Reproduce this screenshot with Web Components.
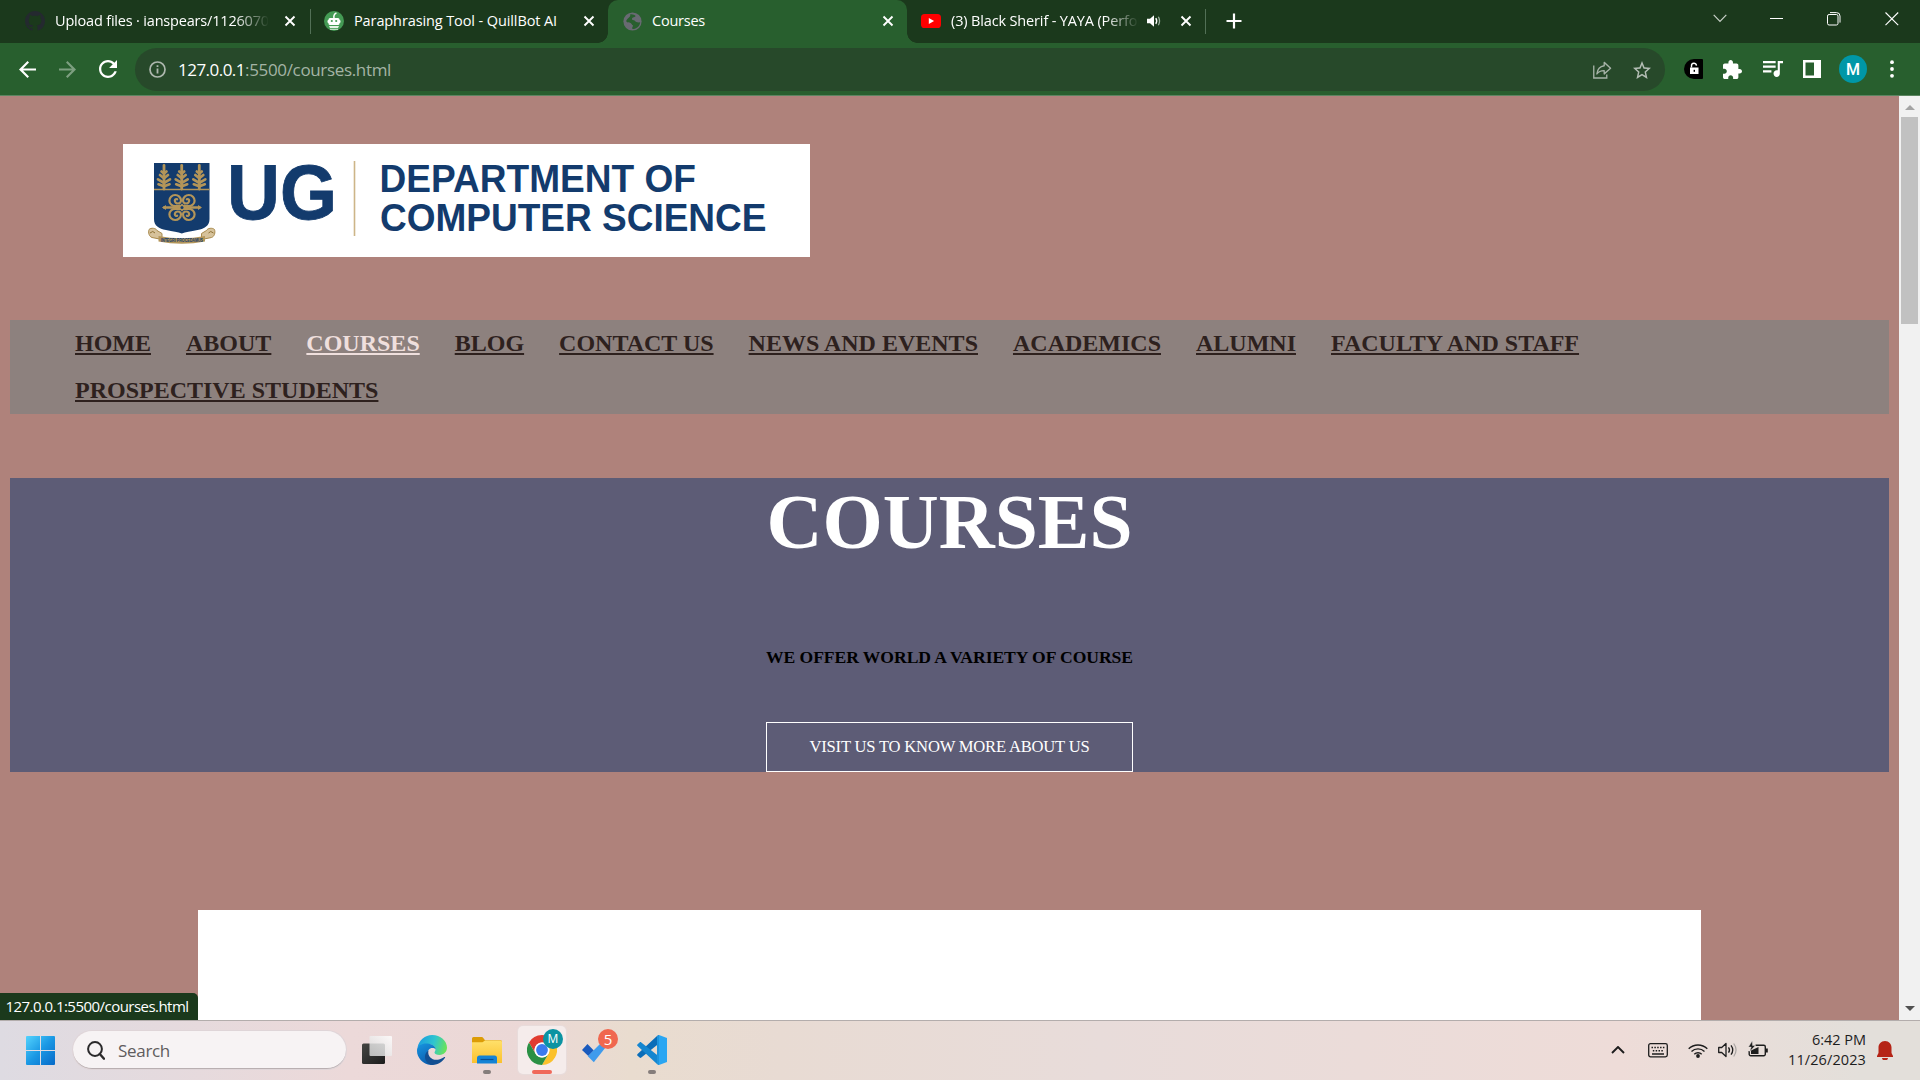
<!DOCTYPE html>
<html lang="en">
<head>
<meta charset="utf-8">
<title>Courses</title>
<style>
html,body{margin:0;height:1080px;overflow:hidden}
body{width:1920px;display:flex;flex-direction:column;font-family:"Open Sans","Noto Sans",sans-serif;background:#af827b}
</style>
</head>
<body>
<tab-strip></tab-strip>
<tool-bar></tool-bar>
<page-view></page-view>
<task-bar></task-bar>
<script>
const ICONS = {
github:['0 0 16 16','<path fill="#24292f" d="M8 0C3.58 0 0 3.58 0 8c0 3.54 2.29 6.53 5.47 7.59.4.07.55-.17.55-.38 0-.19-.01-.82-.01-1.49-2.01.37-2.53-.49-2.69-.94-.09-.23-.48-.94-.82-1.13-.28-.15-.68-.52-.01-.53.63-.01 1.08.58 1.23.82.72 1.21 1.87.87 2.33.66.07-.52.28-.87.51-1.07-1.78-.2-3.64-.89-3.64-3.95 0-.87.31-1.59.82-2.15-.08-.2-.36-1.02.08-2.12 0 0 .67-.21 2.2.82.64-.18 1.32-.27 2-.27s1.36.09 2 .27c1.53-1.04 2.2-.82 2.2-.82.44 1.1.16 1.92.08 2.12.51.56.82 1.27.82 2.15 0 3.07-1.87 3.75-3.65 3.95.29.25.54.73.54 1.48 0 1.07-.01 1.93-.01 2.2 0 .21.15.46.55.38A8.01 8.01 0 0016 8c0-4.42-3.58-8-8-8z"/>'],
quill:['0 0 20 20','<circle cx="10" cy="10" r="10" fill="#449a54"/><path d="M10 7.500C9.500 5 10.500 3 12 2.200" stroke="#fff" stroke-width="1.500" fill="none" stroke-linecap="round"/><rect x="4.500" y="7" width="11" height="7" rx="1.500" fill="#fff"/><rect x="3.500" y="9" width="13" height="3" rx="1" fill="#fff"/><circle cx="7.800" cy="10" r="1.100" fill="#449a54"/><circle cx="12.200" cy="10" r="1.100" fill="#449a54"/><path d="M5 15h10l-1 2H6z" fill="#e5f3e6"/><path d="M6 18.300h8" stroke="#d5ebd7" stroke-width="1"/>'],
globe:['0 0 20 20','<circle cx="10" cy="10" r="9.600" fill="#686a72"/><path d="M7.500 2.500c.5 2-.5 2.300-1.500 3.500S3 8.500 3.500 10c1 1.500 3 .5 4.500 1.500s1 2 2.500 2.500c0 2-1.500 2.500-.5 4 4.500 0 8-3.500 8-7.500-1.200 1-2.600.6-4 .1-1.600-.6-1.100-1.700-2.600-1.900S9 8 9.600 6.600s3.300-.6 3.700-2.300c-1.200-1.500-3.600-2.300-5.800-1.800z" fill="#285f2e"/>'],
youtube:['0 0 20 14','<rect width="20" height="14" rx="3.600" fill="#f00"/><path d="M7.800 4l5.300 3-5.300 3z" fill="#fff"/>'],
x:['0 0 12 12','<path d="M1.500 1.500l9 9M10.500 1.500l-9 9" stroke="#fff" stroke-width="1.900"/>'],
sound:['0 0 14 14','<path d="M0 4.800h3L7 1.200v11.600L3 9.200H0z" fill="#fff"/><path d="M8.800 4.200q1.800 2.800 0 5.600" stroke="#fff" stroke-width="1.400" fill="none"/><path d="M11.400 2.700q2.300 4.300 0 8.600" stroke="#9bb09d" stroke-width="1.300" fill="none"/>'],
plus:['0 0 16 16','<path d="M8 .5v15M.5 8h15" stroke="#fff" stroke-width="2.200"/>'],
chev:['0 0 14 9','<path d="M.7.900L7 7.400 13.300.900" stroke="#c9d1c9" stroke-width="1.200" fill="none"/>'],
min:['0 0 14 14','<path d="M0 6.500h13" stroke="#fff"/>'],
restore:['0 0 14 14','<rect x=".5" y="2.500" width="10.500" height="10.500" rx="1.600" fill="none" stroke="#fff"/><path d="M3 .6h6.500a3.500 3.500 0 013.500 3.500v6.500" fill="none" stroke="#fff"/>'],
close:['0 0 14 14','<path d="M.5.500l12.700 12.700M13.200.500L.5 13.200" stroke="#fff" stroke-width="1.100"/>'],
back:['4 4 16 16','<path fill="#fff" d="M20 11H7.830l5.590-5.590L12 4l-8 8 8 8 1.410-1.410L7.830 13H20v-2z"/>'],
fwd:['4 4 16 16','<path fill="#7d9f80" d="M12 4l-1.410 1.410L16.170 11H4v2h12.170l-5.580 5.590L12 20l8-8z"/>'],
reload:['4 4 16 16','<path fill="#fff" d="M17.65 6.350C16.200 4.900 14.210 4 12 4c-4.420 0-7.990 3.580-7.990 8s3.570 8 7.990 8c3.730 0 6.840-2.550 7.730-6h-2.080c-.82 2.330-3.040 4-5.650 4-3.310 0-6-2.690-6-6s2.690-6 6-6c1.660 0 3.140.69 4.220 1.780L13 11h7V4l-2.350 2.350z"/>'],
info:['0 0 17 17','<circle cx="8.500" cy="8.500" r="7.500" fill="none" stroke="#aeb8af" stroke-width="1.700"/><path d="M8.500 7.500v5M8.500 4.200v1.900" stroke="#aeb8af" stroke-width="1.800"/>'],
share:['0 0 20 18','<path d="M.8 4.500V17h13.700v-3.500" fill="none" stroke="#a7b3a8" stroke-width="1.400"/><path d="M11.800 1.400l6.700 5.800-6.700 5.700V9.600c-3.600-.1-5.900.9-7.700 3.300.5-4.400 3-7.600 7.700-8.200z" fill="none" stroke="#a7b3a8" stroke-width="1.400" stroke-linejoin="round"/>'],
star:['2 2 20 19','<path fill="#b4beb5" d="M22 9.240l-7.190-.62L12 2 9.190 8.630 2 9.240l5.460 4.730L5.820 21 12 17.270 18.180 21l-1.630-7.030L22 9.240zM12 15.400l-3.760 2.270 1-4.280-3.320-2.880 4.380-.38L12 6.100l1.710 4.040 4.380.38-3.320 2.880 1 4.280L12 15.400z"/>'],
lock:['0 0 19 20','<path d="M10 0h8a1 1 0 011 1v18a1 1 0 01-1 1h-8A10 10 0 0110 0z" fill="#000"/><rect x="6" y="8.500" width="8.500" height="6.500" fill="#fff"/><path d="M7.500 8.500V7a2.500 2.500 0 015-.4" fill="none" stroke="#fff" stroke-width="1.400"/><rect x="9.600" y="10.800" width="1.400" height="2" fill="#000"/>'],
puzzle:['2 1 21 21','<path fill="#fff" d="M20.500 11H19V7c0-1.100-.9-2-2-2h-4V3.500C13 2.120 11.880 1 10.500 1S8 2.120 8 3.500V5H4c-1.100 0-1.990.9-1.990 2v3.800H3.500c1.490 0 2.700 1.210 2.700 2.700s-1.210 2.700-2.700 2.700H2V20c0 1.100.9 2 2 2h3.800v-1.500c0-1.490 1.210-2.700 2.700-2.700 1.490 0 2.700 1.210 2.700 2.700V22H17c1.100 0 2-.9 2-2v-4h1.500c1.380 0 2.500-1.120 2.500-2.500S21.880 11 20.500 11z"/>'],
queue:['3 6 19 14','<path fill="#fff" d="M15 6H3v2h12V6zm0 4H3v2h12v-2zM3 16h8v-2H3v2zM17 6v8.180c-.31-.11-.65-.18-1-.18-1.660 0-3 1.340-3 3s1.340 3 3 3 3-1.340 3-3V8h3V6h-5z"/>'],
side:['0 0 18 18','<path fill="#fff" fill-rule="evenodd" d="M0 0h18v18H0zM2.500 2.500v13H11v-13z"/>'],
dots:['0 0 4 18','<g fill="#fff"><circle cx="2" cy="2.200" r="1.900"/><circle cx="2" cy="9" r="1.900"/><circle cx="2" cy="15.800" r="1.900"/></g>'],
up:['0 0 10 5','<path d="M5 0l5 5H0z" fill="#a3a3a3"/>'],
down:['0 0 10 5','<path d="M0 0h10L5 5z" fill="#505050"/>'],
win:['0 0 29 29','<defs><linearGradient id="w" gradientUnits="userSpaceOnUse" x1="0" y1="0" x2="29" y2="29"><stop offset="0" stop-color="#54d3fd"/><stop offset=".5" stop-color="#1a98e4"/><stop offset="1" stop-color="#0669c8"/></linearGradient></defs><path fill="url(#w)" d="M1 0h13v14H0V1a1 1 0 011-1zM15 0h13a1 1 0 011 1v13H15zM0 15h14v14H1a1 1 0 01-1-1zM15 15h14v13a1 1 0 01-1 1H15z"/>'],
find:['0 0 18 19','<circle cx="8" cy="8" r="6.900" fill="none" stroke="#2b2a2b" stroke-width="2"/><path d="M12.800 13l4.200 4.700" stroke="#2b2a2b" stroke-width="2.400" stroke-linecap="round"/>'],
task:['0 0 30 28','<defs><linearGradient id="a" x1="0" y1="0" x2="1" y2="1"><stop offset="0" stop-color="#454542"/><stop offset="1" stop-color="#1c1c1c"/></linearGradient><linearGradient id="b" x1="1" y1="0" x2="0" y2="1"><stop offset="0" stop-color="#fff"/><stop offset="1" stop-color="#d9d9d9"/></linearGradient></defs><rect y="7.500" width="23" height="20.500" rx="1.500" fill="url(#a)"/><rect x="7.500" width="22.500" height="20" rx="1" fill="url(#b)" opacity=".83"/>'],
edge:['0 0 30 30','<defs><linearGradient id="e1" x1="0" y1=".3" x2="1" y2=".5"><stop offset="0" stop-color="#1a9be0"/><stop offset=".55" stop-color="#2fc5cf"/><stop offset="1" stop-color="#6ae35a"/></linearGradient><linearGradient id="e2" x1="0" y1="0" x2=".5" y2="1"><stop offset="0" stop-color="#1795e0"/><stop offset="1" stop-color="#0b5cae"/></linearGradient></defs><path d="M.5 12.500C2 5 8 0 15.200 0 23.500 0 30 6 30 12.600c0 4.200-3.200 7.400-7.400 7.400-3 0-5.100-1.200-5.100-2.400 0-.8 1-1.300 1-3 0-3-3-5.700-7.500-5.700-4 0-8 2-10.500 3.600z" fill="url(#e1)"/><path d="M.1 14C1 10.500 5.500 8 10.500 8.600c4.800.5 8 3 8.200 5.600-.8-.8-2-1.200-3.200-1.200-3.300 0-5 2.700-4.800 5.500.3 4.600 4.300 8.600 9.700 8.800-2 1.700-3.600 2.500-6.400 2.600C5.700 29.400 0 22.500 0 16z" fill="url(#e2)"/><path d="M11.500 15.500c-1.500 6 4 10.200 9.500 9.200 2.800-.4 4.800-1.700 6.300-2.700.6-.3 1.100.2.700.8-3.300 5.200-8.200 7.200-12.500 7.200-4.500-.4-8-4.500-7.500-9 .3-2.500 1.700-4.400 3.500-5.500z" fill="#124f92"/>'],
folder:['0 0 30 27','<defs><linearGradient id="f" x1="0" y1="0" x2="0" y2="1"><stop offset="0" stop-color="#ffe06a"/><stop offset="1" stop-color="#fbc12e"/></linearGradient></defs><path d="M0 1.500A1.500 1.500 0 011.500 0h8c1 0 1.500.5 2.500 2l1 1.200h15.500c.8 0 1.500.7 1.500 1.500V10H0z" fill="#dc9c06"/><path d="M0 5.200h10.500L13 3.600h15.500c.8 0 1.500.7 1.500 1.500V26H0z" fill="url(#f)"/><path d="M5 26.500V21a2.500 2.500 0 012.500-2.500h15A2.500 2.500 0 0125 21v5.500z" fill="#1583d5"/><path d="M8.500 22.500h13" stroke="#0a4f93" stroke-width="1.200"/>'],
chrome:['0 0 30 30','<path d="M15 0a15 15 0 0113 7.500H15a7.500 7.500 0 00-6.500 11.250L2 7.500A15 15 0 0115 0z" fill="#e13c30"/><path d="M28 7.500A15 15 0 0115 30l6.500-11.250A7.500 7.500 0 0015 7.500z" fill="#fbc12b"/><path d="M2 7.500A15 15 0 0015 30l6.500-11.250a7.500 7.500 0 01-13 0z" fill="#2a9044"/><circle cx="15" cy="15" r="7.400" fill="#fff"/><circle cx="15" cy="15" r="5.900" fill="#3b7bee"/>'],
todo:['0 0 26 19','<path d="M0 6l5.500-6 6.300 6.400L6.300 12z" fill="#195abd"/><path d="M5.800 12.200L18 0l7.500 1-13.700 17.200z" fill="#3f9bec"/>'],
code:['0 0 30 30','<path d="M22 0l8 3v24l-8 3z" fill="#2aa6f2"/><path d="M22 0v8.500L4.300 22.600c-.5.4-1.200.4-1.700 0L.6 20.800c-.6-.5-.6-1.400 0-1.900L20 .900z" fill="#0a6db8"/><path d="M22 30v-8.500L4.300 7.400c-.5-.4-1.200-.4-1.700 0L.6 9.200c-.6.5-.6 1.400 0 1.900L20 29.100z" fill="#1486d0"/><path d="M22 0v30l-2-1V1z" fill="#1d94dd"/>'],
tup:['0 0 14 8','<path d="M1 7l6-6 6 6" stroke="#1d1d1d" stroke-width="1.900" fill="none"/>'],
kbd:['0 0 20 15','<rect x=".7" y=".7" width="18.600" height="13.100" rx="1.800" fill="none" stroke="#1d1d1d" stroke-width="1.300"/><path d="M3.500 4.500h13M4.800 7.700h11" stroke="#1d1d1d" stroke-width="1.500" stroke-dasharray="1.500 1.350"/><path d="M4 11h12" stroke="#1d1d1d" stroke-width="1.500"/>'],
wifi:['0 0 20 15','<g fill="none" stroke="#1d1d1d" stroke-width="1.400"><path d="M.7 5.800a13.200 13.200 0 0118.600 0M3.500 8.600a9.200 9.200 0 0113 0M6.300 11.300a5.300 5.300 0 017.400 0"/></g><circle cx="10" cy="13" r="1.900" fill="#1d1d1d"/>'],
vol:['0 0 20 16','<path d="M.7 5.500h3L8 1.500v13l-4.300-4h-3z" fill="none" stroke="#1d1d1d" stroke-width="1.300" stroke-linejoin="round"/><path d="M10.500 5.300q2 2.700 0 5.400M13 3.300q3.500 4.700 0 9.400" fill="none" stroke="#1d1d1d" stroke-width="1.300"/><path d="M15.700 1.500q4.700 6.500 0 13" fill="none" stroke="#aaa5a3" stroke-width="1.200"/>'],
batt:['0 0 20 16','<path d="M7.500 4.200h8.300a1.500 1.500 0 011.500 1.500v7.600a1.500 1.500 0 01-1.500 1.500H2.700a1.500 1.500 0 01-1.500-1.500V10" fill="none" stroke="#1d1d1d" stroke-width="1.400"/><path d="M3 9.500L10.500 6v7H3z" fill="#1d1d1d"/><path d="M18 7.500h1.800v4H18z" fill="#1d1d1d"/><path d="M4.200 0L.5 6h2.700L1.800 10.500 7.300 4.500H4.500z" fill="#1d1d1d" stroke="#e6dfdc" stroke-width=".4"/>'],
bell:['0 0 16 19','<path d="M8 0c4 0 6.500 3 6.500 6.500V12l1.500 3v1H0v-1l1.500-3V6.500C1.500 3 4 0 8 0z" fill="#b52416"/><path d="M5 17h6a3 2.300 0 01-6 0z" fill="#b52416"/>']
};
function define(name, html, after){
  const t = document.createElement('template');
  t.innerHTML = html;
  customElements.define(name, class extends HTMLElement{
    connectedCallback(){
      if(this.shadowRoot) return;
      this.attachShadow({mode:'open'}).append(t.content.cloneNode(true));
      if(after) after(this);
    }
  });
}

/* <ui-icon name w h>: inline vector icon */
define('ui-icon','<style>:host{display:block;flex:none}svg{display:block;width:100%;height:100%}</style>',el=>{
  const [vb,body]=ICONS[el.getAttribute('name')];
  el.style.width=el.getAttribute('w')+'px';
  el.style.height=el.getAttribute('h')+'px';
  el.shadowRoot.innerHTML+=`<svg viewBox="${vb}" preserveAspectRatio="none">${body}</svg>`;
});

/* <fit-text width>: tracks its text to a given advance width */
define('fit-text','<style>:host{display:inline-block;white-space:pre;flex:none}</style><slot></slot>',el=>{
  const n=el.textContent.length, w=+el.getAttribute('width');
  el.style.letterSpacing=((w-el.getBoundingClientRect().width)/n)+'px';
});

define('browser-tab',`<style>
:host{display:flex;align-items:center;height:43px;box-sizing:border-box;padding:0 14px 1px 16px;flex:none;color:#fff;font-size:14.500px}
.t{flex:1;overflow:hidden;margin:0 0 0 10px;line-height:28px;height:28px;min-width:0}
:host([fade]) .t{-webkit-mask:linear-gradient(90deg,#000 calc(100% - 34px),transparent)}
:host([active]){background:#285f2e;border-radius:10px 10px 0 0;position:relative}
:host([active])::before,:host([active])::after{content:"";position:absolute;bottom:0;width:10px;height:10px}
:host([active])::before{left:-10px;background:radial-gradient(circle at 0 0,transparent 9.500px,#285f2e 10px)}
:host([active])::after{right:-10px;background:radial-gradient(circle at 100% 0,transparent 9.500px,#285f2e 10px)}
</style><slot name="icon"></slot><div class="t"><slot></slot></div><slot name="end"></slot><ui-icon name="x" w="12" h="12"></ui-icon>`);

define('tab-strip',`<style>
:host{display:flex;height:43px;background:#1b391c;flex:none}
.sep{width:1px;height:25px;margin-top:9px;background:#527056;flex:none}
.new{margin:13px 0 0 20px}
.win{margin-left:auto;display:flex;align-items:flex-start;padding-top:12px}
</style>
<browser-tab fade style="width:310px;padding-left:25px"><ui-icon slot="icon" name="github" w="20" h="20"></ui-icon><fit-text width="222">Upload files · ianspears/11260701</fit-text><span slot="end" style="width:15px"></span></browser-tab>
<div class="sep"></div>
<browser-tab style="width:297px;padding-left:13px;padding-right:13px"><ui-icon slot="icon" name="quill" w="20" h="20"></ui-icon><fit-text width="203">Paraphrasing Tool - QuillBot AI</fit-text></browser-tab>
<browser-tab active style="width:299px;padding-left:15px;padding-right:13px"><ui-icon slot="icon" name="globe" w="19" h="19"></ui-icon><fit-text width="53">Courses</fit-text></browser-tab>
<browser-tab fade style="width:298px;padding-left:14px;padding-right:13px"><ui-icon slot="icon" name="youtube" w="20" h="14"></ui-icon><fit-text width="222">(3) Black Sherif - YAYA (Performed</fit-text><ui-icon slot="end" name="sound" w="14" h="14" style="margin:0 19px 0 8px"></ui-icon></browser-tab>
<div class="sep"></div>
<ui-icon class="new" name="plus" w="16" h="16"></ui-icon>
<div class="win">
<ui-icon name="chev" w="14" h="9" style="margin:2px 43px 0 0"></ui-icon>
<ui-icon name="min" w="14" h="14" style="margin-right:43px"></ui-icon>
<ui-icon name="restore" w="14" h="14" style="margin-right:44px"></ui-icon>
<ui-icon name="close" w="14" h="14" style="margin-right:21px"></ui-icon>
</div>`);

define('tool-bar',`<style>
:host{display:flex;align-items:center;height:53px;box-sizing:border-box;background:#285f2e;border-bottom:1px solid #5b8560;flex:none;padding:0 25px 0 19px}
.box{display:flex;align-items:center;width:1530px;height:43px;border-radius:22px;background:#27492a;margin:1px 0 0 18px;box-sizing:border-box;padding:0 14px;font-size:17px;color:#a4b4a5}
.box b{font-weight:400;color:#fff}
.av{width:28px;height:28px;border-radius:50%;background:#0097a7;color:#fff;font:500 16px/29px Roboto,sans-serif;text-align:center}
</style>
<ui-icon name="back" w="17" h="17"></ui-icon>
<ui-icon name="fwd" w="17" h="17" style="margin-left:23px"></ui-icon>
<ui-icon name="reload" w="18" h="18" style="margin-left:23px"></ui-icon>
<div class="box"><ui-icon name="info" w="17" h="17"></ui-icon><b style="margin-left:12px"><fit-text width="67">127.0.0.1</fit-text></b><fit-text width="146">:5500/courses.html</fit-text>
<ui-icon name="share" w="19" h="18" style="margin-left:auto"></ui-icon><ui-icon name="star" w="18" h="18" style="margin-left:21px"></ui-icon></div>
<ui-icon name="lock" w="19" h="20" style="margin-left:19px"></ui-icon>
<ui-icon name="puzzle" w="19" h="19" style="margin-left:20px"></ui-icon>
<ui-icon name="queue" w="20" h="16" style="margin-left:21px"></ui-icon>
<ui-icon name="side" w="18" h="18" style="margin-left:20px"></ui-icon>
<div class="av" style="margin-left:18px">M</div>
<ui-icon name="dots" w="4" h="18" style="margin-left:23px"></ui-icon>`);

define('dept-logo',`<style>:host{display:block;width:687px;height:113px;background:#fff}svg{display:block}text{font-family:"Liberation Sans",Arial,sans-serif;font-weight:700;fill:#133b6d}</style>
<svg width="687" height="113" viewBox="123 144 687 113">
<path d="M154 163h55.500v56c0 7-5 9.500-12 11-7 1.500-12 2-15.700 3.500-3.800-1.500-9-2-15.800-3.500-7-1.500-12-4-12-11z" fill="#133b6d"/>
<path d="M154 189.500h55.500" stroke="#b39559" stroke-width="1.400"/>
<g fill="none" stroke="#b39559" stroke-linecap="round"><g id="tree"><path d="M164 165.500v23.500" stroke-width="2.800"/><path d="M161.500 171.500l2.500 2 2.500-2M160 175l4 3.300 4-3.300M158 179.300l6 3.700 6-3.700M158.500 184.300l5.500 2 5.500-2" stroke-width="2.700"/></g><use href="#tree" x="17.700"/><use href="#tree" x="35.300"/></g>
<g fill="none" stroke="#b39559" stroke-width="2.200" stroke-linecap="round"><path d="M164 207.500h35.500" stroke-width="2.400"/><g id="half"><path id="curl" d="M182 207.500q1-2 3-1.500l3.800.200a5.800 5.600 0 1 0-5.800-5.700 3.100 3 0 0 0 6.200 0 1.600 1.600 0 0 0-2.400-1.200"/><use href="#curl" transform="matrix(-1 0 0 1 364 0)"/></g><use href="#half" transform="matrix(1 0 0 -1 0 415)"/></g>
<path d="M182 203.500l4 4-4 4-4-4z" fill="#b39559"/><circle cx="182" cy="207.500" r="1.500" fill="#133b6d"/>
<path d="M166 205l-4 2.500 4 2.500zM198 205l4 2.500-4 2.500z" fill="#b39559"/>
<path d="M149 229.500c2-2 7-1.500 8 1l5 3v6l-10-2c-3-1-4-5-3-8zM214.500 229.500c-2-2-7-1.500-8 1l-5 3v6l10-2c3-1 4-5 3-8z" fill="#d6c29b" stroke="#a98a4c"/>
<path d="M150 233q3-3 5 0M213.500 233q-3-3-5 0" stroke="#8d7135" fill="none"/>
<path d="M158.500 236q23 4.500 46.500 0v5.500q-23 4.500-46.500 0z" fill="#b39559"/>
<text x="161" y="241.800" font-size="5" textLength="42" lengthAdjust="spacingAndGlyphs">INTEGRI PROCEDAMUS</text>
<text x="227" y="219" font-size="77" textLength="110" lengthAdjust="spacingAndGlyphs" stroke="#133b6d" stroke-width=".8">UG</text>
<path d="M354.500 161v75" stroke="#cdb588" stroke-width="1.600"/>
<text x="379.500" y="191.500" font-size="39" textLength="316.500" lengthAdjust="spacingAndGlyphs">DEPARTMENT OF</text>
<text x="380" y="231" font-size="39" textLength="386.500" lengthAdjust="spacingAndGlyphs">COMPUTER SCIENCE</text>
</svg>`);

define('nav-link','<style>:host{display:block}a{color:#2e211e;text-decoration:underline;text-decoration-thickness:2px;text-underline-offset:2px;white-space:nowrap}:host([hover]) a{color:#efdfdd}</style><a><slot></slot></a>');

define('site-nav',`<style>:host{display:flex;flex-wrap:wrap;column-gap:35px;width:1879px;height:94px;box-sizing:border-box;background:#8d817e;padding:0 250px 0 65px;font:700 24px/47px "Liberation Serif","Times New Roman",serif}</style>
<nav-link>HOME</nav-link><nav-link>ABOUT</nav-link><nav-link hover>COURSES</nav-link><nav-link>BLOG</nav-link><nav-link>CONTACT US</nav-link><nav-link>NEWS AND EVENTS</nav-link><nav-link>ACADEMICS</nav-link><nav-link>ALUMNI</nav-link><nav-link>FACULTY AND STAFF</nav-link><nav-link>PROSPECTIVE STUDENTS</nav-link>`);

define('course-hero',`<style>:host{display:flex;flex-direction:column;align-items:center;width:1879px;height:294px;background:#5d5c76;font-family:"Liberation Serif","Times New Roman",serif;color:#fff}
h1{margin:0;font-size:77.500px;line-height:89px;height:90px}
p{margin:77px 0 0;font-weight:700;font-size:17.600px;line-height:24px;color:#000}
.btn{margin-top:auto;width:367px;height:50px;box-sizing:border-box;border:1px solid #fff;text-align:center;font-size:16.600px;line-height:48px}</style>
<h1>COURSES</h1><p><fit-text width="367">WE OFFER WORLD A VARIETY OF COURSE</fit-text></p><div class="btn"><fit-text width="280">VISIT US TO KNOW MORE ABOUT US</fit-text></div>`);

define('scroll-bar',`<style>:host{display:flex;flex-direction:column;align-items:center;width:21px;background:#f1f1f1;padding:9px 0;box-sizing:border-box}
.thumb{width:17px;height:207px;background:#c1c1c1;margin-top:7px}</style><ui-icon name="up" w="10" h="5"></ui-icon><div class="thumb"></div><ui-icon name="down" w="10" h="5" style="margin-top:auto"></ui-icon>`);

define('status-bubble','<style>:host{position:absolute;left:0;bottom:0;width:198px;height:27px;background:#1b391c;color:#fff;border-radius:0 5px 0 0;box-sizing:border-box;padding-left:5.500px;font-size:15px;line-height:27px}</style><slot></slot>');

define('page-view',`<style>:host{display:flex;height:924px;flex:none;background:#af827b;position:relative}
main{flex:1;display:flex;flex-direction:column;padding:48px 10px 0;overflow:hidden}
dept-logo{margin-left:113px}site-nav{margin-top:63px}course-hero{margin-top:64px}
.card{height:110px;flex:none;background:#fff;margin:138px 188px 0}</style>
<main><dept-logo></dept-logo><site-nav></site-nav><course-hero></course-hero><div class="card"></div></main><scroll-bar></scroll-bar>
<status-bubble><fit-text width="183">127.0.0.1:5500/courses.html</fit-text></status-bubble>`);

define('task-app',`<style>:host{display:flex;flex-direction:column;align-items:center;justify-content:center;width:48px;height:48px;border-radius:5px;position:relative;flex:none}
:host([active]){background:#f5eceb;box-shadow:0 0 0 1px #e8dcdb}
.bar{position:absolute;bottom:0;width:8px;height:4px;border-radius:2px;background:#857d7b;display:none}
:host([open]) .bar{display:block}:host([active]) .bar{display:block;width:20px;background:#f0695a}
::slotted(.badge){position:absolute;width:20px;height:20px;border-radius:50%;text-align:center;color:#fff;top:3px;right:3px;line-height:20px}</style><slot></slot><i class="bar"></i>`);

define('task-bar',`<style>
:host{display:flex;align-items:center;height:60px;box-sizing:border-box;border-top:1px solid #b3adac;background:linear-gradient(90deg,#dedbe2 0,#ecd9d9 350px,#ebd8d6 530px,#e9dccf 630px,#e8dbd3 780px,#e8dcda 1100px,#eedcd8 1620px,#e3dfda 1860px);padding:0 27px 1px 26px;flex:none}
.search{display:flex;align-items:center;width:273px;height:38px;box-sizing:border-box;border-radius:19px;background:#f7f3f4;border-bottom:1px solid #b9afb1;box-shadow:0 0 0 1px #dfd5d8;margin-left:18px;padding:1px 0 0 14px;font-size:17px;color:#605c5d}
.clock{display:flex;flex-direction:column;align-items:flex-end;margin-left:20px;width:78px;font-size:14.500px;line-height:20px;color:#1d1d1d}
.tray{margin-left:auto;display:flex;align-items:center}
</style>
<ui-icon name="win" w="29" h="29"></ui-icon>
<div class="search"><ui-icon name="find" w="18" h="19"></ui-icon><fit-text width="52" style="margin-left:13px">Search</fit-text></div>
<ui-icon name="task" w="30" h="28" style="margin-left:16px"></ui-icon>
<task-app style="margin-left:16px"><ui-icon name="edge" w="30" h="30"></ui-icon></task-app>
<task-app open style="margin-left:7px"><ui-icon name="folder" w="30" h="27"></ui-icon></task-app>
<task-app active style="margin-left:7px"><ui-icon name="chrome" w="30" h="30"></ui-icon><span class="badge" style="background:#0b93a2;font-size:12px">M</span></task-app>
<task-app style="margin-left:7px"><ui-icon name="todo" w="26" h="19" style="margin:6px 4px 0 0"></ui-icon><span class="badge" style="background:#f0674f;font-size:15px;right:3px">5</span></task-app>
<task-app open style="margin-left:7px"><ui-icon name="code" w="30" h="30"></ui-icon></task-app>
<div class="tray">
<ui-icon name="tup" w="14" h="8"></ui-icon>
<ui-icon name="kbd" w="20" h="15" style="margin-left:23px"></ui-icon>
<ui-icon name="wifi" w="20" h="15" style="margin-left:20px"></ui-icon>
<ui-icon name="vol" w="20" h="16" style="margin-left:10px"></ui-icon>
<ui-icon name="batt" w="20" h="16" style="margin:-3px 0 0 10px"></ui-icon>
<div class="clock"><fit-text width="54">6:42 PM</fit-text><fit-text width="78">11/26/2023</fit-text></div>
<ui-icon name="bell" w="16" h="19" style="margin-left:11px"></ui-icon>
</div>`);
</script>
</body>
</html>
